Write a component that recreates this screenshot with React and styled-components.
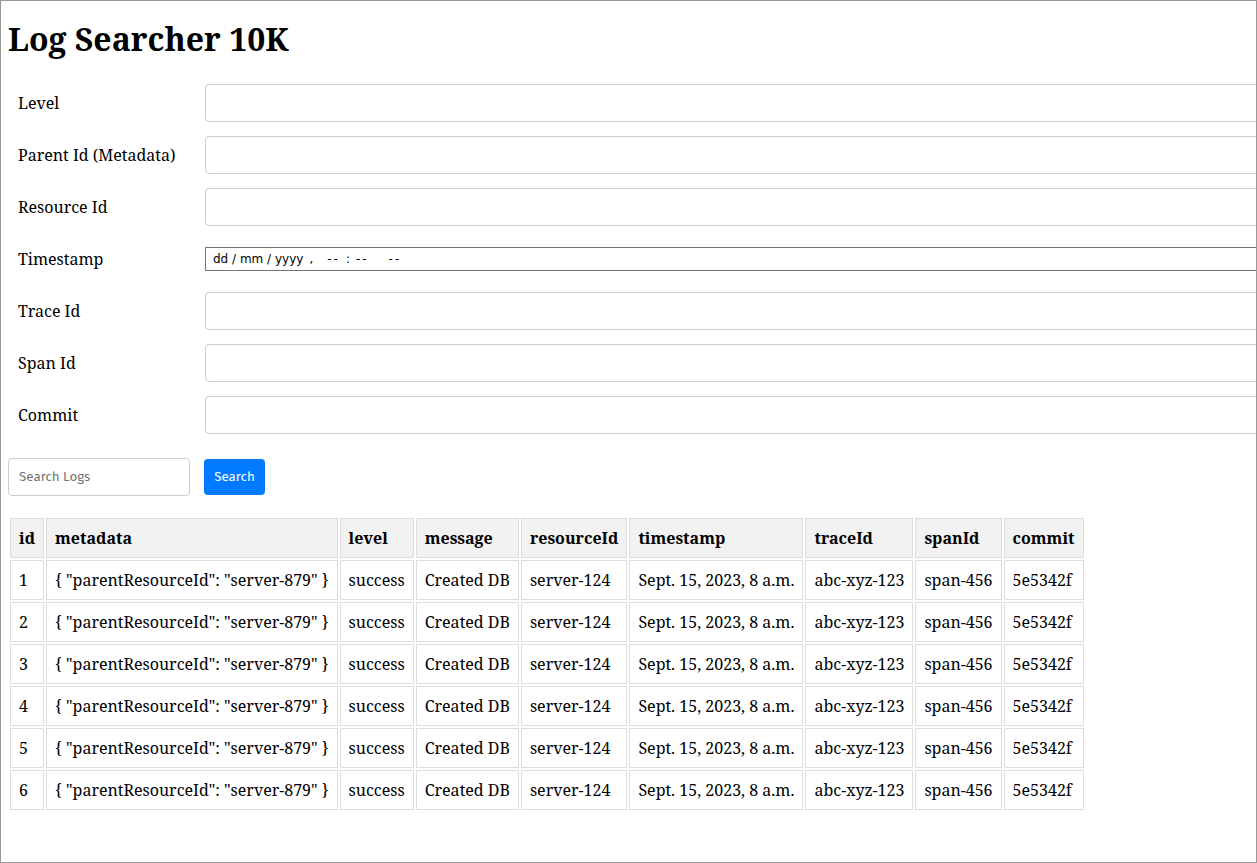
import React from "react";
import styled, { createGlobalStyle } from "styled-components";

const GlobalStyle = createGlobalStyle`
  html, body { margin: 0; padding: 0; background: #fff; }
  body { font-family: "Noto Serif", "DejaVu Serif", serif; color: #000; }
  * { box-sizing: border-box; }
`;

const Page = styled.div`
  width: 100vw;
  height: 100vh;
  border: 1px solid #999;
  overflow: hidden;
  padding: 0 7px;
`;

const Title = styled.h1`
  font-size: 32px;
  font-weight: bold;
  margin: 16px 0 0;
`;

const Form = styled.form`
  display: grid;
  grid-template-columns: 197px 1100px;
  grid-auto-rows: 38px;
  row-gap: 14px;
  margin-top: 24px;
`;

const Label = styled.label`
  font-size: 16px;
  padding-left: 10px;
  align-self: center;
`;

const TextInput = styled.input`
  height: 38px;
  width: 100%;
  border: 1px solid #ccc;
  border-radius: 4px;
  padding: 0 10px;
  background: #fff;
`;

const DateBox = styled.div`
  align-self: center;
  width: 100%;
  height: 24px;
  border: 1px solid #767676;
  background: #fff;
  display: flex;
  align-items: center;
  padding-left: 7px;
  font-family: "DejaVu Sans", "Noto Sans", sans-serif;
  font-size: 12px;
  color: #000;
  white-space: pre;
`;

const Segment = styled.span`
  margin-left: ${(p) => p.$ml || 0}px;
  letter-spacing: ${(p) => (p.$wide ? "2px" : "normal")};
`;

const SearchBar = styled.div`
  display: flex;
  align-items: center;
  gap: 14px;
  margin-top: 24px;
`;

const SearchInput = styled.input`
  width: 182px;
  height: 38px;
  border: 1px solid #ccc;
  border-radius: 4px;
  padding: 0 10px;
  font-family: "Fira Sans", Lato, "Noto Sans", sans-serif;
  font-size: 13.33px;
  &::placeholder { color: #757575; }
`;

const SearchButton = styled.button`
  height: 36px;
  width: 61px;
  padding: 0;
  border: none;
  border-radius: 4px;
  background: #007bff;
  color: #fff;
  font-family: "Fira Sans", Lato, "Noto Sans", sans-serif;
  font-size: 13.33px;
`;

const Table = styled.table`
  margin-top: 20px;
  border-collapse: separate;
  border-spacing: 2px;
  font-size: 16px;
`;

const Th = styled.th`
  background: #f2f2f2;
  border: 1px solid #ddd;
  padding: 8px;
  text-align: left;
  font-weight: bold;
`;

const Td = styled.td`
  border: 1px solid #ddd;
  padding: 8px;
  text-align: left;
`;

const fields = [
  { label: "Level" },
  { label: "Parent Id (Metadata)" },
  { label: "Resource Id" },
  { label: "Timestamp", date: true },
  { label: "Trace Id" },
  { label: "Span Id" },
  { label: "Commit" },
];

const dateSegments = [
  ["dd / mm / yyyy", 0, false],
  [",", 6, false],
  ["--", 14, true],
  [":", 6, false],
  ["--", 6, true],
  ["--", 20, true],
];

const columns = ["id", "metadata", "level", "message", "resourceId", "timestamp", "traceId", "spanId", "commit"];

const rows = [1, 2, 3, 4, 5, 6].map((id) => [
  String(id),
  '{ "parentResourceId": "server-879" }',
  "success",
  "Created DB",
  "server-124",
  "Sept. 15, 2023, 8 a.m.",
  "abc-xyz-123",
  "span-456",
  "5e5342f",
]);

export default function App() {
  return (
    <>
      <GlobalStyle />
      <Page>
        <Title>Log Searcher 10K</Title>
        <Form onSubmit={(e) => e.preventDefault()}>
          {fields.map((f) => (
            <React.Fragment key={f.label}>
              <Label>{f.label}</Label>
              {f.date ? (
                <DateBox role="textbox" aria-label="Timestamp">
                  {dateSegments.map(([t, ml, wide], i) => (
                    <Segment key={i} $ml={ml} $wide={wide}>
                      {t}
                    </Segment>
                  ))}
                </DateBox>
              ) : (
                <TextInput type="text" />
              )}
            </React.Fragment>
          ))}
        </Form>
        <SearchBar>
          <SearchInput type="text" placeholder="Search Logs" />
          <SearchButton type="button">Search</SearchButton>
        </SearchBar>
        <Table>
          <thead>
            <tr>
              {columns.map((c) => (
                <Th key={c}>{c}</Th>
              ))}
            </tr>
          </thead>
          <tbody>
            {rows.map((r) => (
              <tr key={r[0]}>
                {r.map((v, i) => (
                  <Td key={i}>{v}</Td>
                ))}
              </tr>
            ))}
          </tbody>
        </Table>
      </Page>
    </>
  );
}
